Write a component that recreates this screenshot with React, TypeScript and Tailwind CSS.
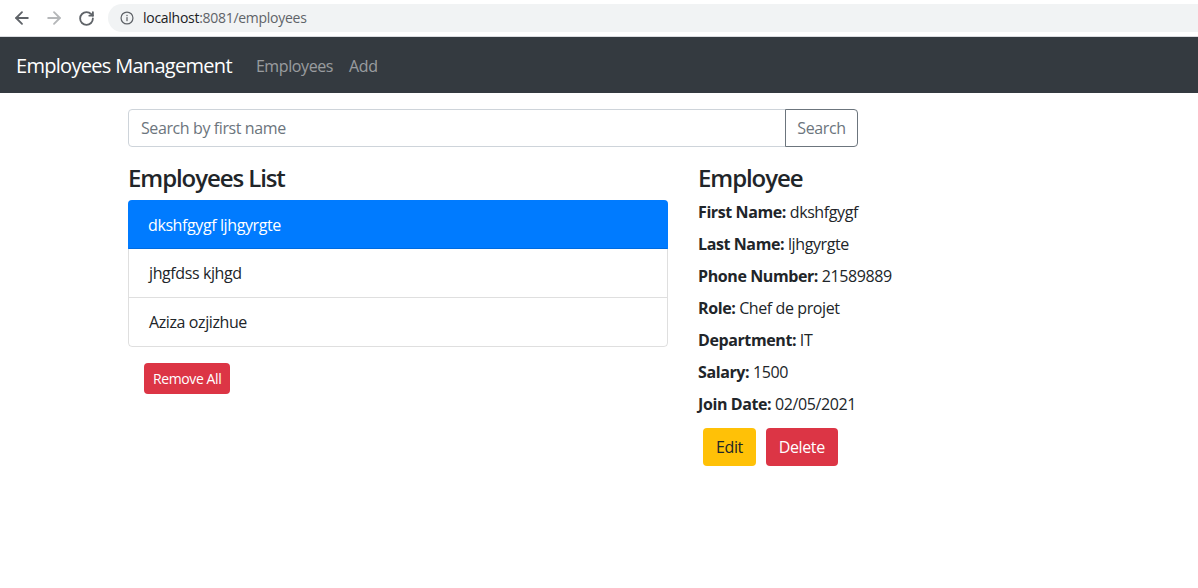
import { ArrowLeft, ArrowRight, RotateCw } from 'lucide-react';

const employees = [
  { id: 1, name: 'dkshfgygf ljhgyrgte' },
  { id: 2, name: 'jhgfdss kjhgd' },
  { id: 3, name: 'Aziza ozjizhue' },
];

const details = [
  ['First Name:', 'dkshfgygf'],
  ['Last Name:', 'ljhgyrgte'],
  ['Phone Number:', '21589889'],
  ['Role:', 'Chef de projet'],
  ['Department:', 'IT'],
  ['Salary:', '1500'],
  ['Join Date:', '02/05/2021'],
];

function BrowserBar() {
  return (
    <div className="h-[37px] bg-white border-b border-[#dadce0] flex items-center">
      <div className="flex items-center text-[#5f6368]">
        <ArrowLeft size={20} strokeWidth={2.2} className="ml-[12px]" />
        <ArrowRight size={20} strokeWidth={2.2} className="ml-[12px] text-[#b5b7b9]" />
        <RotateCw size={17} strokeWidth={2.6} className="ml-[14px]" />
      </div>
      <div className="ml-[13px] flex-1 h-[28px] bg-[#f1f3f4] rounded-l-full flex items-center mb-[1px]">
        <svg width="14" height="14" viewBox="0 0 16 16" className="ml-[12px] text-[#5f6368]">
          <circle cx="8" cy="8" r="6.8" fill="none" stroke="currentColor" strokeWidth="1.4" />
          <rect x="7.3" y="7" width="1.4" height="4.6" fill="currentColor" />
          <rect x="7.3" y="4.4" width="1.4" height="1.5" fill="currentColor" />
        </svg>
        <span className="ml-[9px] text-[14px] text-[#202124] tracking-[-0.02em]">
          localhost<span className="text-[#5f6368]">:8081/employees</span>
        </span>
      </div>
    </div>
  );
}

export default function App() {
  return (
    <div className="w-[1198px] h-[588px] overflow-hidden bg-white text-[#212529] font-['Open_Sans',sans-serif] tracking-[-0.025em]">
      <BrowserBar />

      {/* Navbar */}
      <nav className="h-[56px] bg-[#343a40] flex items-center px-4 pt-[2px]">
        <span className="text-white text-[20px] mr-4 tracking-[-0.035em]">Employees Management</span>
        <span className="text-white/50 text-[16px] px-2">Employees</span>
        <span className="text-white/50 text-[16px] px-2">Add</span>
      </nav>

      <div className="pl-[128px] pt-4">
        {/* Search */}
        <div className="w-[730px] flex h-[38px] mb-4">
          <input
            placeholder="Search by first name"
            className="flex-1 border border-[#ced4da] rounded-l px-3 text-[16px] placeholder:text-[#6c757d] outline-none"
          />
          <button className="w-[73px] border border-[#6c757d] text-[#6c757d] rounded-r text-[16px] -ml-px">
            Search
          </button>
        </div>

        <div className="flex gap-[30px]">
          {/* List */}
          <div className="w-[540px]">
            <h4 className="text-[24px] leading-[29px] font-semibold tracking-[-0.045em] mb-2">Employees List</h4>
            <ul className="border border-black/[0.125] rounded">
              {employees.map((e, i) => (
                <li
                  key={e.id}
                  className={
                    i === 0
                      ? 'bg-[#007bff] text-white px-5 h-[49px] -m-px flex items-center rounded-t'
                      : 'px-5 h-[49px] flex items-center border-t border-black/[0.125]'
                  }
                >
                  {e.name}
                </li>
              ))}
            </ul>
            <button className="m-4 bg-[#dc3545] text-white text-[14px] rounded px-[9px] h-[31px]">Remove All</button>
          </div>

          {/* Details */}
          <div>
            <h4 className="text-[24px] leading-[29px] font-semibold tracking-[-0.045em] mb-2">Employee</h4>
            {details.map(([label, value]) => (
              <div key={label} className="h-[32px] leading-[24px]">
                <strong className="font-bold">{label}</strong> {value}
              </div>
            ))}
            <div className="flex gap-[10px] ml-[5px] mt-1">
              <button className="bg-[#ffc107] text-[#212529] rounded px-[13px] h-[38px] text-[16px]">Edit</button>
              <button className="bg-[#dc3545] text-white rounded px-[13px] h-[38px] text-[16px]">Delete</button>
            </div>
          </div>
        </div>
      </div>
    </div>
  );
}
